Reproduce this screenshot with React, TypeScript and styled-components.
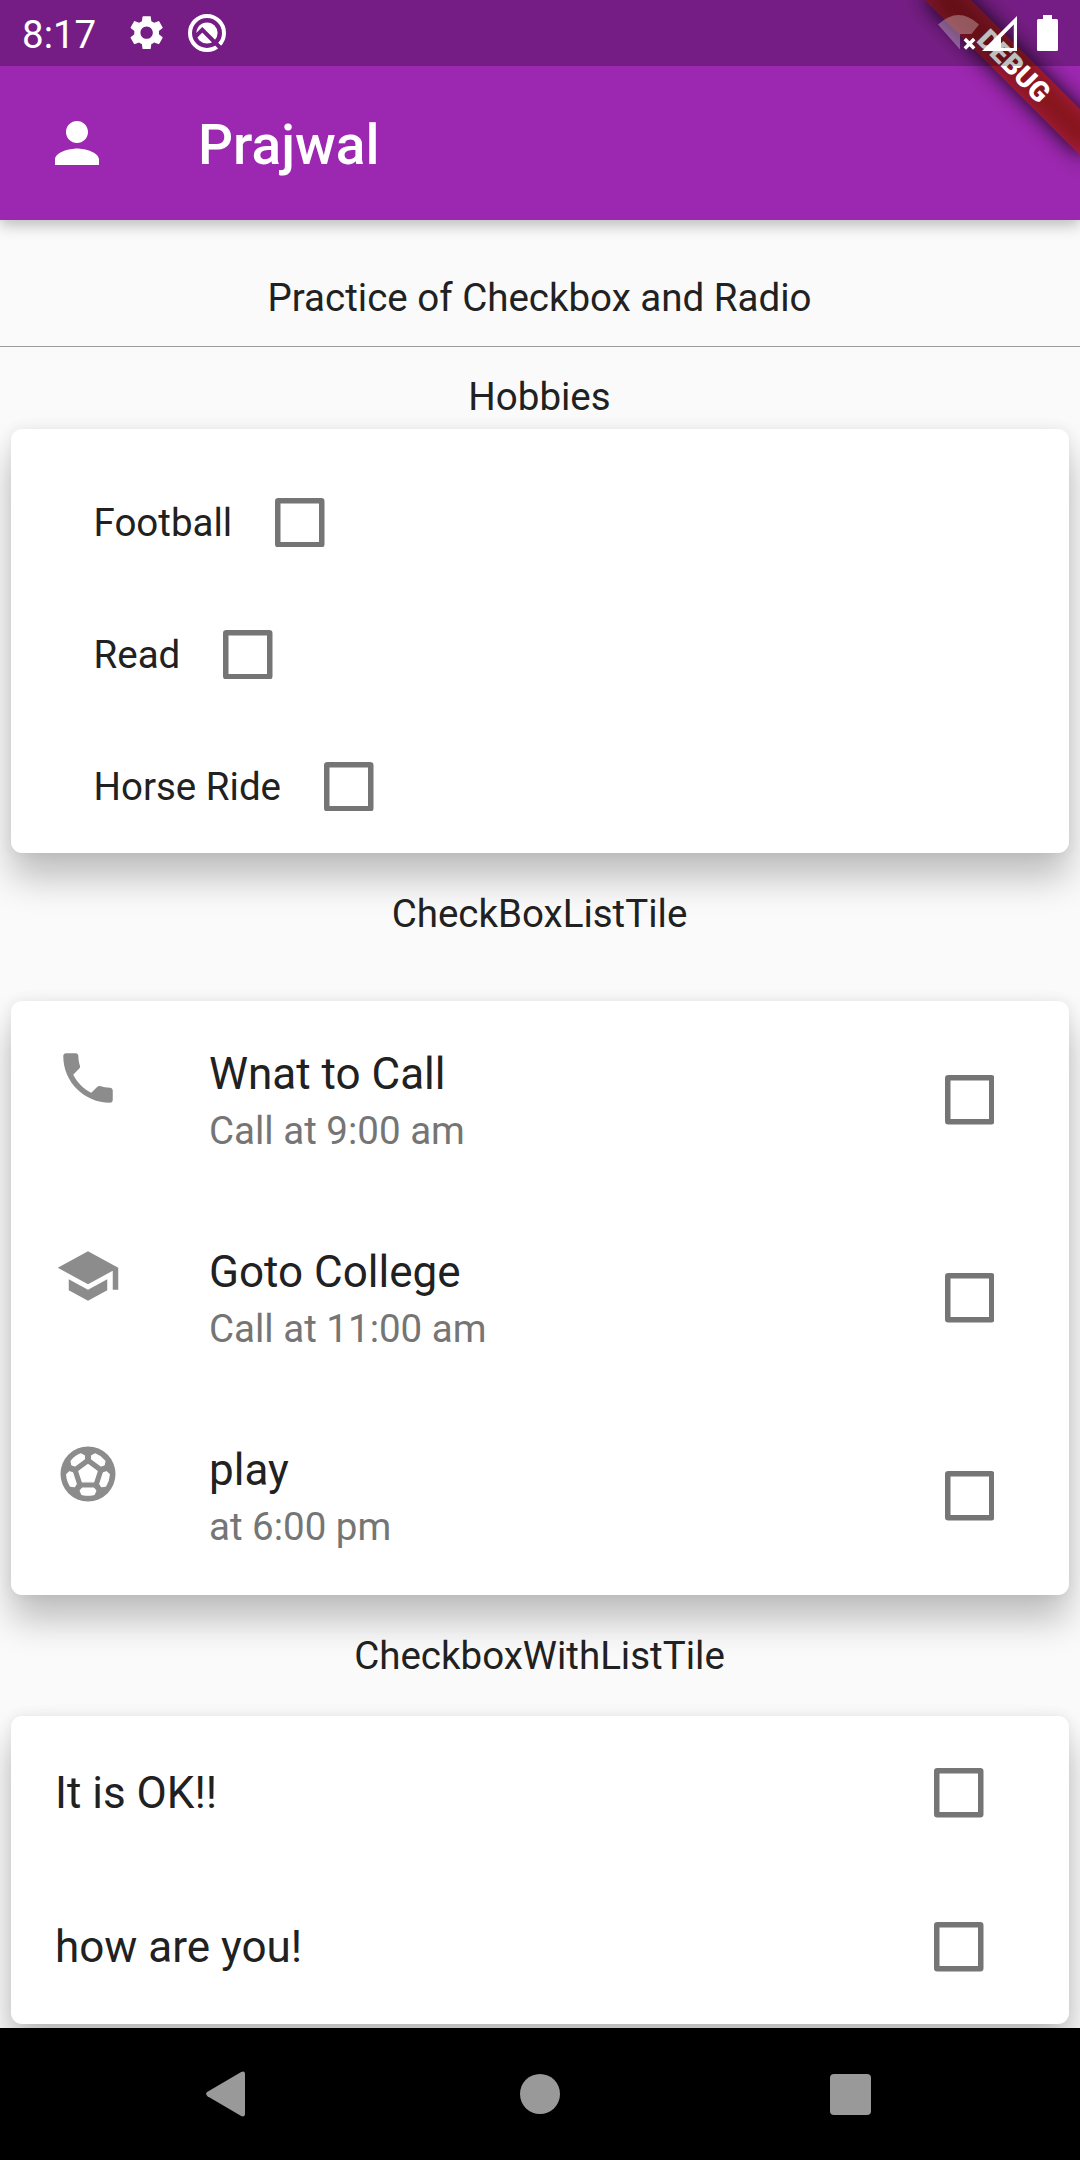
import React from "react";
import styled, { createGlobalStyle } from "styled-components";
import { MdPerson, MdPhone, MdSchool, MdSettings } from "react-icons/md";

const GlobalStyle = createGlobalStyle`
  *, *::before, *::after { box-sizing: border-box; }
  body { margin: 0; background: #000; }
`;

const Screen = styled.div`
  width: 1080px;
  height: 2160px;
  display: flex;
  flex-direction: column;
  overflow: hidden;
  background: #fafafa;
  color: #212121;
  font-family: Roboto, "Noto Sans", sans-serif;
  font-size: 38.5px;
  line-height: 45px;

  svg { display: block; flex: none; }
`;

const Header = styled.header`
  position: relative;
  z-index: 1;
  height: 220px;
  flex: none;
  color: #fff;
  background: #9c27b0;
  box-shadow: 0 5px 14px rgba(0, 0, 0, 0.26);
`;

const StatusBar = styled.div`
  position: relative;
  z-index: 2;
  height: 66px;
  padding: 0 22px;
  display: flex;
  align-items: center;
  background: rgba(0, 0, 0, 0.25);
`;

const Clock = styled.span`
  width: 104px;
  padding-top: 3px;
`;

const StatusIcons = styled.div<{ $end?: boolean }>`
  display: flex;
  align-items: center;
  gap: ${(p) => (p.$end ? "3px" : "20px")};
  margin-left: ${(p) => (p.$end ? "auto" : "0")};
`;

const BatterySlot = styled.span`
  margin-left: 17px;
`;

const Toolbar = styled.div`
  height: 154px;
  padding-left: 44px;
  display: flex;
  align-items: center;
  gap: 88px;
`;

const Title = styled.h1`
  margin: 0;
  padding-top: 3px;
  font-size: 55px;
  line-height: 64px;
  font-weight: 500;
`;

const RibbonClip = styled.div`
  position: absolute;
  top: 0;
  right: 0;
  width: 260px;
  height: 220px;
  overflow: hidden;
`;

const Ribbon = styled.div`
  position: absolute;
  left: 150px;
  top: 77px;
  width: 220px;
  height: 33px;
  transform-origin: 110px -77px;
  transform: rotate(45deg);
  text-align: center;
  font-size: 28px;
  line-height: 33px;
  font-weight: 900;

  &::before, &::after {
    content: "";
    position: absolute;
    inset: 0;
    z-index: -1;
    background: rgba(0, 0, 0, 0.88);
    filter: blur(10.9px);
  }
  &::after {
    background: rgba(183, 28, 28, 0.69);
    filter: none;
  }
`;

const Content = styled.main`
  flex: 1;
  min-height: 0;
  overflow: hidden;
`;

const Heading = styled.h2<{ $height: number; $top: number }>`
  margin: 0;
  height: ${(p) => p.$height}px;
  padding-top: ${(p) => p.$top}px;
  padding-right: 1px;
  text-align: center;
  font-size: 38.5px;
  font-weight: 400;
`;

const Divider = styled.hr`
  height: 1px;
  margin: 0;
  border: 0;
  background: #9c9c9c;
`;

const Card = styled.section<{ $top?: number }>`
  margin: 0 11px;
  padding-top: ${(p) => p.$top ?? 0}px;
  border-radius: 11px;
  background: #fff;
  box-shadow: 0 25px 36px 0 rgba(0, 0, 0, 0.24), 0 0 14px rgba(0, 0, 0, 0.07);
`;

const HobbyRow = styled.label`
  height: 132px;
  padding-left: 82.5px;
  display: flex;
  align-items: center;
  gap: 43px;
`;

const TaskRow = styled.label`
  height: 198px;
  padding: 0 74.75px 0 44px;
  display: flex;
  align-items: center;
`;

const Leading = styled.span`
  align-self: flex-start;
  width: 154px;
  margin-top: 44px;
  color: #8c8c8c;
`;

const TaskText = styled.span`
  align-self: flex-start;
  flex: 1;
  padding-top: 46.5px;
  display: flex;
  flex-direction: column;
  gap: 8.5px;
`;

const TileTitle = styled.span`
  font-size: 44px;
  line-height: 52px;
`;

const Subtitle = styled.span`
  color: #757575;
`;

const SimpleRow = styled.label`
  height: 154px;
  padding: 0 85.25px 0 44px;
  display: flex;
  align-items: center;
  justify-content: space-between;
`;

const NavBar = styled.nav`
  height: 132px;
  flex: none;
  position: relative;
  z-index: 1;
  display: grid;
  grid-template-columns: repeat(3, 311px);
  justify-content: center;
  align-items: center;
  justify-items: center;
  background: #000;
`;

const Checkbox = () => (
  <svg width="49.5" height="49.5" viewBox="0 0 18 18">
    <rect x="1" y="1" width="16" height="16" rx="0.2" fill="none" stroke="#757575" strokeWidth="2" strokeLinejoin="round" />
  </svg>
);

const QIcon = () => (
  <svg width="40" height="40" viewBox="0 0 40 40">
    <circle cx="20" cy="20" r="17" fill="none" stroke="#fff" strokeWidth="4" />
    <circle cx="20" cy="20" r="10.6" fill="#fff" />
    <path d="M8.5 23.5L15.3 16.8L35 36.5" fill="none" stroke="#751d84" strokeWidth="4" />
  </svg>
);

const WifiIcon = () => (
  <svg width="41" height="36" viewBox="0 0 41 36">
    <path d="M0 9.5Q20.5 -9.5 41 9.5L33.5 19H22V34.5Z" fill="#fff" fillOpacity="0.3" />
    <path d="M26.8 24L36.2 33.4M36.2 24L26.8 33.4" stroke="#fff" strokeWidth="3.5" />
  </svg>
);

const SignalIcon = () => (
  <svg width="35" height="35" viewBox="0 0 35 35">
    <path fillRule="evenodd" d="M35 0V35H0ZM31.8 8.5L19 21.5V32H31.8Z" fill="#fff" />
  </svg>
);

const BatteryIcon = () => (
  <svg width="21" height="36" viewBox="0 0 21 36">
    <path d="M6 0H15V4H19.5Q21 4 21 5.5V34.5Q21 36 19.5 36H1.5Q0 36 0 34.5V5.5Q0 4 1.5 4H6Z" fill="#fff" />
  </svg>
);

const SoccerIcon = () => (
  <svg width="66" height="66" viewBox="-12 -12 24 24">
    <circle r="10" fill="currentColor" />
    <g fill="#fff" stroke="#fff" strokeWidth="0.5" strokeLinejoin="round">
      <path d="M0 -3.4L3.3 -1L2.05 2.85H-2.05L-3.3 -1Z" />
      {[0, 72, 144, 216, 288].map((angle) => (
        <path key={angle} transform={`rotate(${angle})`} d="M-2.1 5.2H2.1L2.8 6.1L2.2 7.4Q0 8 -2.2 7.4L-2.8 6.1Z" />
      ))}
    </g>
  </svg>
);

const hobbies = ["Football", "Read", "Horse Ride"];

const tasks = [
  { icon: <MdPhone size={66} />, title: "Wnat to Call", subtitle: "Call at 9:00 am" },
  { icon: <MdSchool size={66} />, title: "Goto College", subtitle: "Call at 11:00 am" },
  { icon: <SoccerIcon />, title: "play", subtitle: "at 6:00 pm" },
];

const replies = ["It is OK!!", "how are you!"];

export default function App() {
  return (
    <Screen>
      <GlobalStyle />
      <Header>
        <StatusBar>
          <Clock>8:17</Clock>
          <StatusIcons>
            <MdSettings size={41.25} />
            <QIcon />
          </StatusIcons>
          <StatusIcons $end>
            <WifiIcon />
            <SignalIcon />
            <BatterySlot><BatteryIcon /></BatterySlot>
          </StatusIcons>
        </StatusBar>
        <Toolbar>
          <MdPerson size={66} />
          <Title>Prajwal</Title>
        </Toolbar>
        <RibbonClip>
          <Ribbon>DEBUG</Ribbon>
        </RibbonClip>
      </Header>
      <Content>
        <Heading $height={126} $top={55}>Practice of Checkbox and Radio</Heading>
        <Divider />
        <Heading $height={82} $top={27}>Hobbies</Heading>
        <Card $top={27.5}>
          {hobbies.map((name) => (
            <HobbyRow key={name}>
              {name}
              <Checkbox />
            </HobbyRow>
          ))}
        </Card>
        <Heading $height={148.5} $top={38.5}>CheckBoxListTile</Heading>
        <Card>
          {tasks.map((task) => (
            <TaskRow key={task.title}>
              <Leading>{task.icon}</Leading>
              <TaskText>
                <TileTitle>{task.title}</TileTitle>
                <Subtitle>{task.subtitle}</Subtitle>
              </TaskText>
              <Checkbox />
            </TaskRow>
          ))}
        </Card>
        <Heading $height={121} $top={37.5}>CheckboxWithListTile</Heading>
        <Card>
          {replies.map((text) => (
            <SimpleRow key={text}>
              <TileTitle>{text}</TileTitle>
              <Checkbox />
            </SimpleRow>
          ))}
        </Card>
      </Content>
      <NavBar>
        <svg width="60" height="60" viewBox="0 0 60 60" fill="#999">
          <path d="M8.5 27.8L42.2 8Q46 6.5 46 10V50Q46 53.5 42.2 52L8.5 32.2Q5.7 30 8.5 27.8Z" />
        </svg>
        <svg width="60" height="60" viewBox="0 0 60 60" fill="#999">
          <circle cx="30" cy="30" r="20" />
        </svg>
        <svg width="60" height="60" viewBox="0 0 60 60" fill="#999">
          <rect x="9" y="10" width="41" height="41" rx="4" />
        </svg>
      </NavBar>
    </Screen>
  );
}
